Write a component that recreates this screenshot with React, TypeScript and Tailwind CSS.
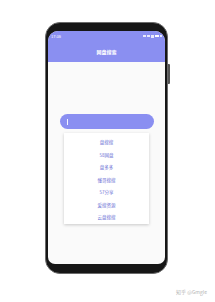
import React from "react";

const items = ["盘搜搜", "58网盘", "盘多多", "懂哥搜搜", "57分享", "爱搜资源", "云盘搜搜"];

export default function App() {
  return (
    <div
      className="w-[215px] h-[302px] bg-white overflow-hidden flex flex-col"
      style={{ fontFamily: '"Noto Sans CJK SC", "Noto Sans", sans-serif' }}
    >
      <div className="pt-[22px] pl-[45px] flex">
        <div className="relative w-[123px] h-[252px] rounded-[15px] bg-[#161616] border border-[#6b6b6b] pt-[8px] px-[2px] pb-[9px] flex flex-col">
          <div className="absolute right-[-3px] top-[41px] w-[2px] h-[20px] bg-[#555] rounded-r-[1px]" />
          <div className="flex-1 rounded-t-[10px] rounded-b-[7px] bg-[#fafafa] overflow-hidden flex flex-col">
            <div className="bg-[#8a8ff1] h-[31px] flex flex-col">
              <div className="h-[10px] flex items-center justify-between px-[3px] text-white text-[4px] leading-none">
                <span>17:36</span>
                <div className="flex items-center gap-[1px]">
                  <span className="w-[3px] h-[2px] bg-white/80" />
                  <span className="w-[3px] h-[2px] bg-white/80" />
                  <span className="w-[3px] h-[3px] bg-white/80" />
                  <span className="w-[4px] h-[2px] bg-white" />
                  <span className="w-[2px] h-[2px] bg-white/80" />
                </div>
              </div>
              <div className="flex-1 flex items-center justify-center text-white text-[5px] font-bold leading-none pb-[1px]">
                网盘搜索
              </div>
            </div>
            <div className="flex flex-col pt-[52px]">
              <div className="mx-[12px] mr-[11px] h-[15px] rounded-full bg-[#8a8ff1] flex items-center pl-[7px]">
                <span className="w-[1px] h-[6px] bg-white/90" />
              </div>
              <div className="mx-[16px] mt-[4px] bg-white shadow-[0_1px_3px_rgba(0,0,0,0.2)] pt-[3px] flex flex-col">
                {items.map((t) => (
                  <div
                    key={t}
                    className="h-[12.5px] flex items-center justify-center text-[4.5px] leading-none text-[#6f74d6]"
                  >
                    {t}
                  </div>
                ))}
              </div>
            </div>
          </div>
        </div>
      </div>
      <div className="mt-[15px] pr-[8px] flex justify-end text-[5px] leading-none text-[#b5b5b5]">
        知乎 @Gmgle
      </div>
    </div>
  );
}
